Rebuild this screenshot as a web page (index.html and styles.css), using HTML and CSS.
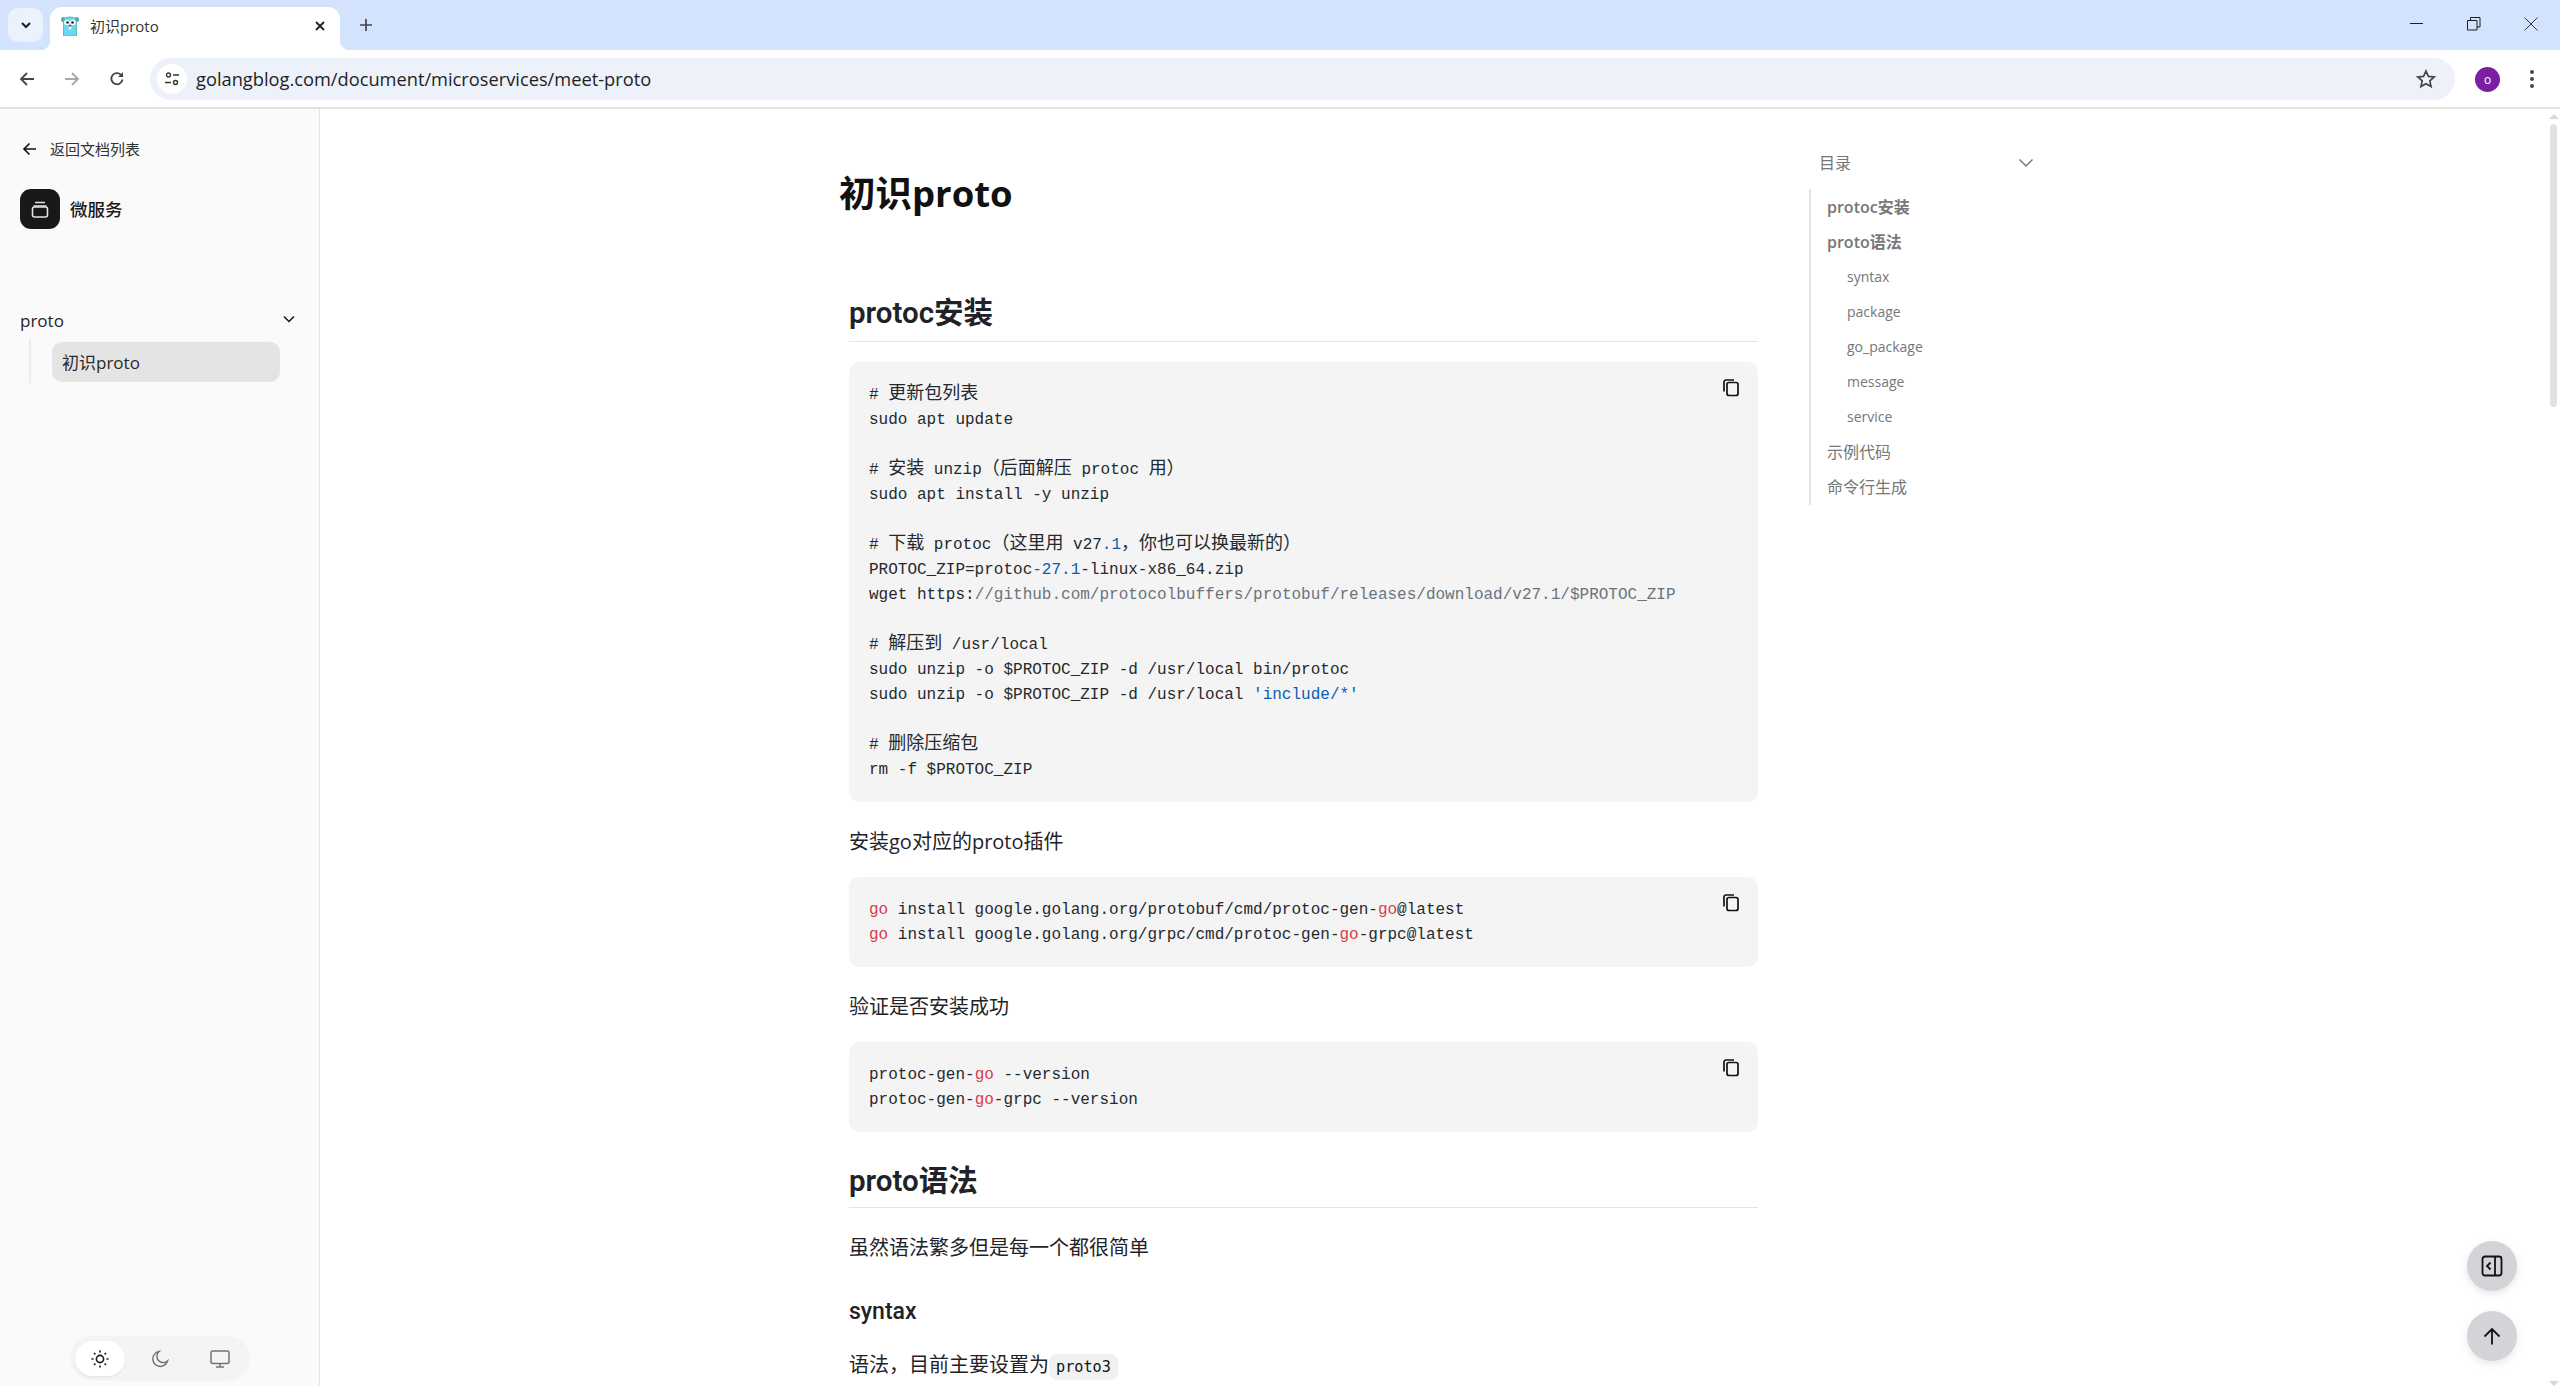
FILE: index.html
```html
<!DOCTYPE html>
<html lang="zh-CN">
<head>
<meta charset="utf-8">
<title>初识proto</title>
<link rel="stylesheet" href="styles.css">
</head>
<body>
<div class="tabstrip">
  <button class="tabsearch"><svg width="14" height="14" viewBox="0 0 14 14"><path d="M3 5l4 4 4-4" fill="none" stroke="#1f1f1f" stroke-width="2"/></svg></button>
  <div class="tab">
    <svg class="favicon" width="20" height="20" viewBox="0 0 20 20"><circle cx="3.500" cy="3.500" r="2.500" fill="#4fa9bf"/><circle cx="16.500" cy="3.500" r="2.500" fill="#4fa9bf"/><path d="M3.500 20V6q0-5 6.500-5t6.500 5v14z" fill="#6ad7ee" stroke="#4fa9bf" stroke-width=".8"/><circle cx="7" cy="6.500" r="2.800" fill="#fff"/><circle cx="13" cy="6.500" r="2.800" fill="#fff"/><circle cx="7.500" cy="6.500" r="1.300" fill="#222"/><circle cx="12.500" cy="6.500" r="1.300" fill="#222"/><path d="M8.800 10h2.400v3.500H8.800z" fill="#fff"/><path d="M8.800 9h2.400v1.500H8.800z" fill="#7a4b3a"/></svg>
    <span class="tabtitle">初识proto</span>
    <svg class="tabclose" width="10" height="10" viewBox="0 0 10 10"><path d="M1 1l8 8M9 1l-8 8" stroke="#1f1f1f" stroke-width="1.800"/></svg>
  </div>
  <svg class="newtab" width="14" height="14" viewBox="0 0 14 14"><path d="M7 1v12M1 7h12" stroke="#444746" stroke-width="1.700"/></svg>
  <div class="wincontrols">
    <svg width="14" height="14" viewBox="0 0 14 14"><path d="M0 6.500h13" stroke="#1f1f1f" stroke-width="1"/></svg>
    <svg width="14" height="14" viewBox="0 0 14 14"><path d="M.5 3.500h9.500v9.500H.5zM3.500 3.500V.5H13v9.500h-3" fill="none" stroke="#1f1f1f" stroke-width="1"/></svg>
    <svg width="14" height="14" viewBox="0 0 14 14"><path d="M.5.5l13 13M13.500.5l-13 13" stroke="#333" stroke-width="1"/></svg>
  </div>
</div>
<div class="toolbar">
  <svg class="navicon" width="16" height="16" viewBox="0 0 16 16"><path d="M15 8H2M8 2L2 8l6 6" fill="none" stroke="#444746" stroke-width="1.800"/></svg>
  <svg class="navicon" width="16" height="16" viewBox="0 0 16 16"><path d="M1 8h13M8 2l6 6-6 6" fill="none" stroke="#a6a8aa" stroke-width="1.800"/></svg>
  <svg class="navicon" width="16" height="16" viewBox="0 0 16 16"><path d="M13.500 8.500A5.600 5.600 0 1 1 12 3.800" fill="none" stroke="#444746" stroke-width="1.800"/><path d="M14 1v5H9z" fill="#444746"/></svg>
  <div class="omnibox">
    <span class="siteinfo"><svg width="14" height="14" viewBox="0 0 14 14"><circle cx="3.500" cy="3" r="2" fill="none" stroke="#333" stroke-width="1.400"/><path d="M8 3h6M0 10.500h6" stroke="#333" stroke-width="1.500"/><circle cx="10.500" cy="10.500" r="2" fill="none" stroke="#333" stroke-width="1.400"/></svg></span>
    <span class="url">golangblog.com/document/microservices/meet-proto</span>
    <svg class="star" width="20" height="20" viewBox="0 0 20 20"><path d="M10 2l2.400 5.400 5.800.6-4.400 3.900 1.300 5.700L10 14.700l-5.100 2.900 1.300-5.700L1.800 8l5.800-.6z" fill="none" stroke="#444746" stroke-width="1.700"/></svg>
  </div>
  <span class="avatar">o</span>
  <svg class="kebab" width="4" height="18" viewBox="0 0 4 18"><circle cx="2" cy="2" r="2" fill="#444746"/><circle cx="2" cy="9" r="2" fill="#444746"/><circle cx="2" cy="16" r="2" fill="#444746"/></svg>
</div>
<div class="app">
  <aside class="sidebar">
    <a class="backlink"><svg width="16" height="16" viewBox="0 0 16 16"><path d="M14 8H2M7.500 2.500L2 8l5.500 5.500" fill="none" stroke="#111" stroke-width="1.600"/></svg><span>返回文档列表</span></a>
    <div class="brand">
      <span class="brandicon"><svg width="20" height="20" viewBox="0 0 20 20"><path d="M5 3.500h10M3.500 7h13" stroke="#e5e5e5" stroke-width="1.500" fill="none"/><rect x="2.500" y="8" width="15" height="10" rx="2" fill="none" stroke="#e5e5e5" stroke-width="1.600"/></svg></span>
      <span class="brandname">微服务</span>
    </div>
    <div class="group">
      <span>proto</span>
      <svg width="14" height="14" viewBox="0 0 14 14"><path d="M2 4.500l5 5 5-5" fill="none" stroke="#111" stroke-width="1.500"/></svg>
    </div>
    <div class="subnav"><a class="subitem">初识proto</a></div>
    <div class="themes">
      <span class="theme active"><svg width="20" height="20" viewBox="0 0 20 20"><circle cx="10" cy="10" r="3.600" fill="none" stroke="#18181b" stroke-width="1.600"/><path d="M10 1.500v2M10 16.500v2M1.500 10h2M16.500 10h2M4 4l1.400 1.400M14.600 14.600L16 16M4 16l1.400-1.400M14.600 5.400L16 4" stroke="#18181b" stroke-width="1.600"/></svg></span>
      <span class="theme"><svg width="20" height="20" viewBox="0 0 20 20"><path d="M9 2.500a7.500 7.500 0 1 0 8.500 9.500 6 6 0 0 1-8.500-9.500z" fill="none" stroke="#71717a" stroke-width="1.500"/></svg></span>
      <span class="theme"><svg width="20" height="20" viewBox="0 0 20 20"><rect x="1" y="2" width="18" height="12.500" rx="2" fill="none" stroke="#71717a" stroke-width="1.500"/><path d="M10 14.500v3.500M6 18h8" stroke="#71717a" stroke-width="1.500"/></svg></span>
    </div>
  </aside>
  <main class="content">
    <article class="doc">
      <h1>初识proto</h1>
      <div class="body">
        <h2 class="first">protoc安装</h2>
        <div class="code"><svg class="copy" width="18" height="18" viewBox="0 0 18 18"><rect x="5" y="3.500" width="11" height="13" rx="2" fill="none" stroke="#111" stroke-width="1.700"/><path d="M2 12.500V3a2 2 0 0 1 2-2h8" fill="none" stroke="#111" stroke-width="1.700"/></svg><pre># <u>更新包列表</u>
sudo apt update

# <u>安装</u> unzip<u>（后面解压</u> protoc <u>用）</u>
sudo apt install -y unzip

# <u>下载</u> protoc<u>（这里用</u> v27<b>.1</b><u>，你也可以换最新的）</u>
PROTOC_ZIP=protoc<b>-27.1</b>-linux-x86_64.zip
wget https:<i>//github.com/protocolbuffers/protobuf/releases/download/v27.1/$PROTOC_ZIP</i>

# <u>解压到</u> /usr/local
sudo unzip -o $PROTOC_ZIP -d /usr/local bin/protoc
sudo unzip -o $PROTOC_ZIP -d /usr/local <b>'include/*'</b>

# <u>删除压缩包</u>
rm -f $PROTOC_ZIP</pre></div>
        <p>安装go对应的proto插件</p>
        <div class="code"><svg class="copy" width="18" height="18" viewBox="0 0 18 18"><rect x="5" y="3.500" width="11" height="13" rx="2" fill="none" stroke="#111" stroke-width="1.700"/><path d="M2 12.500V3a2 2 0 0 1 2-2h8" fill="none" stroke="#111" stroke-width="1.700"/></svg><pre><em>go</em> install google.golang.org/protobuf/cmd/protoc-gen-<em>go</em>@latest
<em>go</em> install google.golang.org/grpc/cmd/protoc-gen-<em>go</em>-grpc@latest</pre></div>
        <p>验证是否安装成功</p>
        <div class="code"><svg class="copy" width="18" height="18" viewBox="0 0 18 18"><rect x="5" y="3.500" width="11" height="13" rx="2" fill="none" stroke="#111" stroke-width="1.700"/><path d="M2 12.500V3a2 2 0 0 1 2-2h8" fill="none" stroke="#111" stroke-width="1.700"/></svg><pre>protoc-gen-<em>go</em> --version
protoc-gen-<em>go</em>-grpc --version</pre></div>
        <h2>proto语法</h2>
        <p>虽然语法繁多但是每一个都很简单</p>
        <h3>syntax</h3>
        <p class="tight">语法，目前主要设置为<code>proto3</code></p>
      </div>
    </article>
    <nav class="toc">
      <div class="tochead"><span>目录</span><svg width="16" height="16" viewBox="0 0 16 16"><path d="M1.500 4.500L8 11l6.500-6.500" fill="none" stroke="#777" stroke-width="1.500"/></svg></div>
      <ul class="toclist">
        <li class="strong">protoc安装</li>
        <li class="strong">proto语法</li>
        <li class="sub">syntax</li>
        <li class="sub">package</li>
        <li class="sub">go_package</li>
        <li class="sub">message</li>
        <li class="sub">service</li>
        <li>示例代码</li>
        <li>命令行生成</li>
      </ul>
    </nav>
  </main>
  <div class="fabs">
    <span class="fab"><svg width="22" height="22" viewBox="0 0 22 22"><rect x="1.500" y="1.500" width="19" height="19" rx="2.500" fill="none" stroke="#111" stroke-width="1.800"/><path d="M14 1.500v19M9.500 7.500L6 11l3.500 3.500" fill="none" stroke="#111" stroke-width="1.800"/></svg></span>
    <span class="fab"><svg width="18" height="18" viewBox="0 0 18 18"><path d="M9 17.500V2M1.500 9.500L9 2l7.500 7.500" fill="none" stroke="#111" stroke-width="1.800"/></svg></span>
  </div>
  <div class="scrollbar"><span class="sb-up"></span><span class="thumb"></span><span class="sb-down"></span></div>
</div>
</body>
</html>
```
FILE: styles.css
```css
* { box-sizing: border-box; }
html, body { margin: 0; height: 1386px; overflow: hidden; background: #fff; }
body { font-family: "Open Sans", "Noto Sans CJK SC", sans-serif; color: #1f2328; display: flex; flex-direction: column; }

.tabstrip { height: 50px; flex: none; background: #d3e3fd; display: flex; align-items: flex-start; padding: 7px 0 0 8px; }
.tabsearch { width: 35px; height: 34px; margin-top: 1px; border: 0; padding: 0; border-radius: 10px; background: #ebf1fd; display: flex; align-items: center; justify-content: center; flex: none; }
.tab { width: 290px; height: 43px; margin-left: 7px; background: #fff; border-radius: 12px 12px 0 0; display: flex; align-items: center; padding: 0 15px 6px 10px; position: relative; flex: none; }
.tab::before, .tab::after { content: ""; position: absolute; bottom: 0; width: 10px; height: 10px; background: radial-gradient(circle at var(--cx) 0, #d3e3fd 10px, #fff 10.5px); }
.tab::before { left: -10px; --cx: 0; }
.tab::after { right: -10px; --cx: 100%; }
.favicon { flex: none; }
.tabtitle { margin-left: 10px; font-size: 15px; color: #333; flex: 1; }
.tabclose { flex: none; }
.newtab { margin: 11px 0 0 19px; flex: none; }
.wincontrols { margin-left: auto; display: flex; gap: 43px; padding: 10px 22px 0 0; }

.toolbar { height: 59px; flex: none; background: #fff; border-bottom: 2px solid #e2e2e2; border-radius: 12px 12px 0 0; display: flex; align-items: center; padding: 1px 12px 0 19px; }
.navicon { flex: none; margin-right: 29px; }
.navicon:nth-child(3) { margin-right: 25px; }
.omnibox { flex: 1; height: 42px; background: #ecf1fa; border-radius: 21px; display: flex; align-items: center; padding: 0 19px 0 7px; }
.siteinfo { width: 30px; height: 30px; border-radius: 50%; background: #fff; display: flex; align-items: center; justify-content: center; flex: none; }
.url { margin: 0 0 2px 9px; font-size: 18.25px; color: #1f1f1f; flex: 1; }
.star { flex: none; }
.avatar { width: 25px; height: 25px; border-radius: 50%; background: #7b1fa2; color: #fff; font-size: 12px; display: flex; align-items: center; justify-content: center; margin-left: 20px; flex: none; }
.kebab { margin: 0 14px 0 30px; flex: none; }

.app { flex: 1; display: flex; min-height: 0; position: relative; }
.sidebar { width: 320px; flex: none; background: #fafafa; border-right: 1px solid #e5e5e5; padding: 28px 20px 5px; display: flex; flex-direction: column; }
.backlink { display: flex; align-items: center; gap: 12px; height: 24px; font-size: 15px; color: #333; margin-left: 2px; }
.backlink span { margin-bottom: 2px; }
.brand { display: flex; align-items: center; gap: 10px; margin-top: 28px; }
.brandicon { width: 40px; height: 40px; background: #18181b; border-radius: 11px; display: flex; align-items: center; justify-content: center; }
.brandname { font-size: 17.5px; color: #1a1a1a; font-weight: 500; margin-bottom: 2px; }
.group { display: flex; justify-content: space-between; align-items: center; margin-top: 80px; padding: 0 3px 3px 0; font-size: 17px; color: #1f2328; height: 26px; }
.group svg { margin-bottom: 3px; }
.subnav { margin: 4px 0 0 9px; border-left: 2px solid #ececec; padding: 3px 0 1px 21px; width: 251px; }
.subitem { display: block; height: 40px; line-height: 41px; padding: 0 10px; border-radius: 10px; background: #e4e4e4; font-size: 17px; color: #2a2a2a; width: 228px; }
.themes { margin: auto 0 0 50px; width: 180px; height: 45px; border-radius: 23px; background: #f4f4f5; display: flex; align-items: center; gap: 10px; padding: 0 5px; flex: none; }
.theme { width: 50px; height: 35px; flex: none; border-radius: 18px; display: flex; align-items: center; justify-content: center; }
.theme.active { background: #fff; box-shadow: 0 1px 3px rgba(0,0,0,.08); }

.content { flex: 1; display: flex; min-width: 0; padding-left: 519px; }
.doc { width: 919px; flex: none; padding-top: 60px; }
h1 { margin: 0; font-size: 36.5px; line-height: 48px; font-weight: 700; color: #111; }
.body { padding-left: 10px; }
h2 { margin: 29px 0 20px; font-family: Roboto, "Noto Sans CJK SC", sans-serif; font-size: 29.5px; line-height: 40px; height: 47px; font-weight: 600; color: #1f2328; border-bottom: 1px solid #e1e5ea; }
h2.first { margin-top: 76px; height: 49px; border-bottom-color: #e5e5e5; }
h3 { margin: 33px 0 16px; font-family: Roboto, sans-serif; font-size: 23px; line-height: 30px; font-weight: 500; color: #1f2328; }
p { margin: 24px 0 19px; font-size: 20px; line-height: 32px; color: #1f2328; }
p.tight { margin-top: 22px; }
.code { background: #f4f4f4; border-radius: 10px; padding: 21px 20px 19px; position: relative; }
.copy { position: absolute; right: 18px; top: 17px; }
pre { margin: 0; font-family: "Liberation Mono", "Noto Sans CJK SC", monospace; font-size: 16px; line-height: 25px; color: #24292e; }
pre u { text-decoration: none; font-family: "Noto Sans CJK SC", sans-serif; font-size: 18px; line-height: 0; }
pre b { font-weight: 400; color: #0d5bb5; }
pre i { font-style: normal; color: #6a737d; }
pre em { font-style: normal; color: #d73a49; }
code { font-family: "DejaVu Sans Mono", monospace; font-size: 15.2px; background: #f0f1f3; padding: 4px 7px; border-radius: 8px; color: #111; }

.toc { width: 215px; margin-left: 61px; padding-top: 41px; color: #777; flex: none; }
.tochead { display: flex; justify-content: space-between; align-items: center; height: 24px; font-size: 16px; }
.tochead svg { margin-top: 2px; }
.toclist { list-style: none; margin: 15px 0 0 -10px; padding: 1px 0 0 16px; border-left: 2px solid #e5e5e5; font-size: 16px; }
.toclist li { height: 35px; line-height: 35px; }
.toclist .strong { font-weight: 600; }
.toclist .sub { font-size: 14px; line-height: 33px; padding-left: 20px; }

.fabs { position: absolute; right: 43px; bottom: 25px; display: flex; flex-direction: column; gap: 20px; }
.fab { width: 50px; height: 50px; border-radius: 50%; background: #d4d4d8; display: flex; align-items: center; justify-content: center; box-shadow: 0 3px 8px rgba(0,0,0,.1); }
.scrollbar { position: absolute; right: 0; top: 0; bottom: 0; width: 12px; }
.thumb { position: absolute; left: 2px; right: 3px; top: 15px; height: 283px; background: #e2e2e2; border-radius: 4px; }
.sb-up, .sb-down { position: absolute; left: 1px; width: 0; height: 0; border-left: 5px solid transparent; border-right: 5px solid transparent; }
.sb-up { top: 5px; border-bottom: 5px solid #d8d8d8; }
.sb-down { bottom: 0; border-top: 5px solid #d8d8d8; }
```
